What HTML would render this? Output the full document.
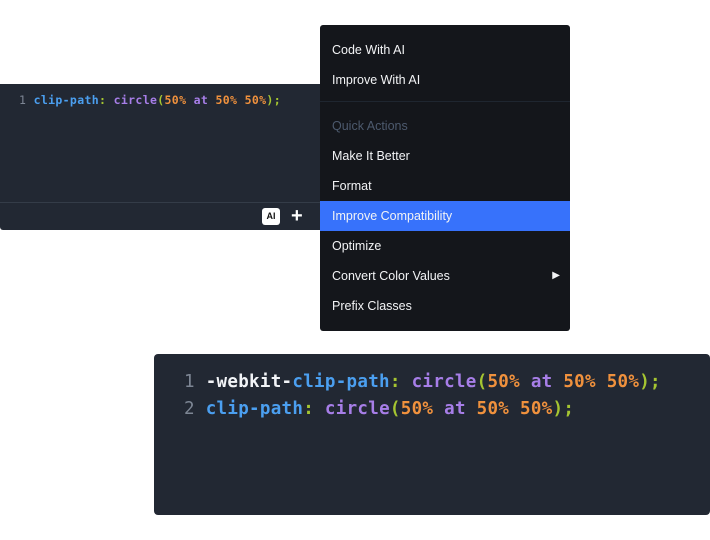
<!DOCTYPE html>
<html><head><style>
body{margin:0;width:710px;height:540px;background:#fff;position:relative;overflow:hidden;font-family:"Liberation Sans",sans-serif}
.code{font-family:"DejaVu Sans Mono","Liberation Mono",monospace;font-weight:bold;white-space:pre}
.n{color:#7d8694;font-weight:normal}.p{color:#4b9ff0}.f{color:#a77ee8}.v{color:#f0913d}.g{color:#a5c531}.w{color:#f2f4f7}
#e1{position:absolute;left:0;top:84px;width:330px;height:146px;background:#222833;border-radius:0 0 3px 3px}
#e1 .code{position:absolute;left:19px;top:9px;font-size:11.5px;letter-spacing:0.35px;line-height:14px}
#e1 .ft{position:absolute;left:0;right:0;top:118px;border-top:1px solid #343c48}
#ai{position:absolute;left:262px;top:208px;width:18px;height:17px;background:#fff;border-radius:3px;color:#111;font-size:9px;font-weight:bold;text-align:center;line-height:17px}
#plus{position:absolute;left:291px;top:205px;color:#fff;font-size:20px;font-weight:bold;line-height:22px}
#m{position:absolute;left:320px;top:25px;width:250px;height:306px;background:#14161b;border-radius:3px;color:#f2f3f5;font-size:12.5px}
#m div{position:absolute;left:0;right:0;height:30px;line-height:30px;padding-left:12px}
#m .h{background:#3772fb}
#m .q{color:#4d5a6e}
#m hr{position:absolute;left:0;right:0;top:76px;margin:0;border:0;border-top:1px solid #1f2630}
#e2{position:absolute;left:154px;top:354px;width:556px;height:161px;background:#222833;border-radius:4px}
#e2 .code{position:absolute;left:30px;top:15px;font-size:17.5px;letter-spacing:0.3px;line-height:27px}
</style></head><body>
<div id="e1"><div class="code"><span class="n">1</span> <span class="p">clip-path</span><span class="g">:</span> <span class="f">circle</span><span class="g">(</span><span class="v">50%</span> <span class="f">at</span> <span class="v">50%</span> <span class="v">50%</span><span class="g">);</span></div><div class="ft"></div></div>
<div id="ai">AI</div><div id="plus">+</div>
<div id="m">
<div style="top:10px">Code With AI</div>
<div style="top:40px">Improve With AI</div>
<hr>
<div class="q" style="top:86px">Quick Actions</div>
<div style="top:116px">Make It Better</div>
<div style="top:146px">Format</div>
<div class="h" style="top:176px">Improve Compatibility</div>
<div style="top:206px">Optimize</div>
<div style="top:236px">Convert Color Values<span style="position:absolute;right:10px;font-size:10px">▶</span></div>
<div style="top:266px">Prefix Classes</div>
</div>
<div id="e2"><div class="code"><span class="n">1</span> <span class="w">-webkit-</span><span class="p">clip-path</span><span class="g">:</span> <span class="f">circle</span><span class="g">(</span><span class="v">50%</span> <span class="f">at</span> <span class="v">50%</span> <span class="v">50%</span><span class="g">);</span>
<span class="n">2</span> <span class="p">clip-path</span><span class="g">:</span> <span class="f">circle</span><span class="g">(</span><span class="v">50%</span> <span class="f">at</span> <span class="v">50%</span> <span class="v">50%</span><span class="g">);</span></div></div>
</body></html>
